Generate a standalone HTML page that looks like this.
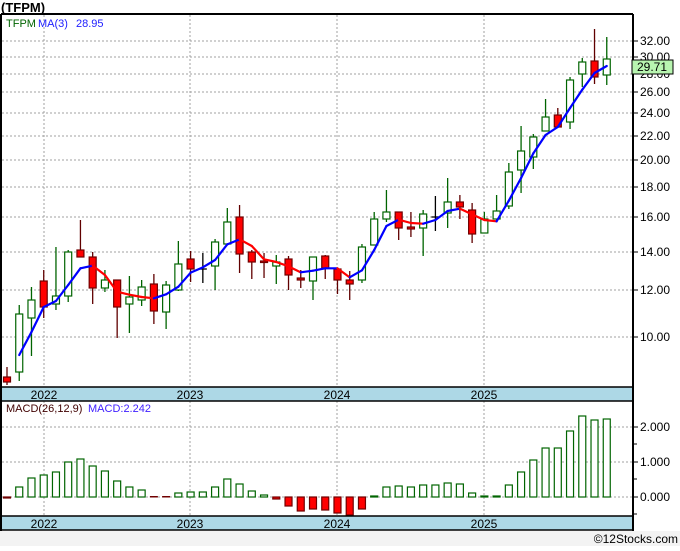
<!DOCTYPE html>
<html><head><meta charset="utf-8"><style>
html,body{margin:0;padding:0;background:#fff}
body{width:680px;height:546px;overflow:hidden;font-family:"Liberation Sans",sans-serif}
svg text{font-family:"Liberation Sans",sans-serif}
</style></head><body>
<svg id="s" width="680" height="546" xmlns="http://www.w3.org/2000/svg">
<rect x="0" y="0" width="680" height="546" fill="#fff"/>
<rect x="0" y="531" width="680" height="15" fill="#f3f3f3"/>
<text x="1" y="12" font-size="13" font-weight="bold" fill="#000">(TFPM)</text>
<g id="grid" stroke="#a0a0a0" stroke-width="1" stroke-dasharray="2,2"></g>
<g id="c"></g>
<rect x="1" y="387" width="632" height="14" fill="#add8e6" stroke="#000" stroke-width="1.5"/>
<rect x="1" y="516" width="632" height="14" fill="#add8e6" stroke="#000" stroke-width="1.5"/>
<g font-size="12" fill="#000" text-anchor="middle">
<text x="44" y="399">2022</text><text x="190" y="399">2023</text><text x="337" y="399">2024</text><text x="484" y="399">2025</text>
<text x="44" y="528">2022</text><text x="190" y="528">2023</text><text x="337" y="528">2024</text><text x="484" y="528">2025</text>
</g>
<line x1="1" y1="14" x2="633" y2="14" stroke="#000" stroke-width="2"/>
<line x1="1" y1="14" x2="1" y2="531" stroke="#000" stroke-width="2"/>
<line x1="633" y1="14" x2="633" y2="531" stroke="#000" stroke-width="2"/>
<g font-size="12" fill="#000" id="lab"></g>
<text x="6" y="27" font-size="11" fill="#006400">TFPM</text>
<text x="38" y="27" font-size="11" fill="#2020ff">MA(3)</text>
<text x="76" y="27" font-size="11" fill="#2020ff">28.95</text>
<text x="6" y="412" font-size="11" fill="#400000">MACD(26,12,9)</text>
<text x="88" y="412" font-size="11" fill="#4020ff">MACD:2.242</text>
<rect x="632" y="60" width="41" height="14" fill="#b8f5b0" stroke="#000" stroke-width="1"/>
<text x="652" y="71" font-size="12" text-anchor="middle" fill="#000">29.71</text>
<text x="678" y="543" font-size="12" text-anchor="end" fill="#000">©12Stocks.com</text>
</svg>
<script>
var NS="http://www.w3.org/2000/svg";
function el(p,t,a){var e=document.createElementNS(NS,t);for(var k in a)e.setAttribute(k,a[k]);p.appendChild(e);return e;}
var g=document.getElementById('grid'),c=document.getElementById('c'),lab=document.getElementById('lab');
var levels=[[41,"32.00"],[57,"30.00"],[74,"28.00"],[92,"26.00"],[113,"24.00"],[136,"22.00"],[160,"20.00"],[187,"18.00"],[217,"16.00"],[252,"14.00"],[290,"12.00"],[337,"10.00"]];
levels.forEach(function(l){el(g,'line',{x1:2,x2:633,y1:l[0],y2:l[0]});el(lab,'line',{x1:633,x2:638,y1:l[0],y2:l[0],stroke:'#000'});var t=el(lab,'text',{x:640,y:l[0]+4});t.textContent=l[1];});
[[427,"2.000"],[462,"1.000"],[497,"0.000"]].forEach(function(l){el(g,'line',{x1:2,x2:633,y1:l[0],y2:l[0]});el(lab,'line',{x1:633,x2:638,y1:l[0],y2:l[0],stroke:'#000'});var t=el(lab,'text',{x:640,y:l[0]+4});t.textContent=l[1];});
[444,479,514].forEach(function(y){el(lab,'line',{x1:633,x2:637,y1:y,y2:y,stroke:'#000'});});
[44,190,337,484].forEach(function(x){el(g,'line',{x1:x,x2:x,y1:15,y2:387});el(g,'line',{x1:x,x2:x,y1:401,y2:516});});
var d=[[367,377,382,385,'r'],[305,314,372,381,'g'],[287,300,318,356,'g'],[270,281,307,318,'r'],[247,296,304,310,'g'],[250,252,296,302,'g'],[220,250,257,257,'r'],[252,257,288,304,'r'],[270,280,288,292,'g'],[280,280,307,338,'r'],[276,297,304,333,'g'],[280,287,300,306,'g'],[274,284,311,324,'r'],[281,285,312,329,'g'],[241,264,290,291,'g'],[251,259,269,282,'r'],[253,269,269,283,'k'],[239,242,266,290,'g'],[208,222,244,245,'g'],[205,217,254,273,'r'],[250,252,262,279,'r'],[253,261,262,278,'r'],[255,262,266,284,'g'],[256,259,275,290,'r'],[270,278,280,288,'r'],[257,257,281,300,'g'],[255,256,268,279,'r'],[269,269,280,294,'r'],[271,280,284,300,'r'],[244,247,280,283,'g'],[212,219,245,245,'g'],[190,212,219,222,'g'],[212,212,228,240,'r'],[212,227,229,237,'r'],[210,214,228,256,'g'],[196,217,217,231,'k'],[178,202,213,228,'g'],[195,202,207,219,'r'],[203,210,234,243,'r'],[212,219,233,233,'g'],[195,211,219,221,'g'],[163,172,206,209,'g'],[126,151,170,193,'g'],[134,137,157,169,'g'],[99,117,131,131,'g'],[108,115,127,127,'r'],[77,80,122,129,'g'],[58,62,74,87,'g'],[29,61,77,84,'r'],[37,59,75,85,'g']];
var X=function(i){return 7+12.24*i;};
var closes=[];
d.forEach(function(q,i){var x=X(i);var col=q[4]=='g'?'#006400':(q[4]=='r'?'#600000':'#000');
el(c,'line',{x1:x,x2:x,y1:q[0],y2:q[3],stroke:col,'stroke-width':1.3});
if(q[4]=='k'){el(c,'line',{x1:x-4,x2:x+4,y1:q[1],y2:q[1],stroke:'#000','stroke-width':1.3});}
else{var h=Math.max(q[2]-q[1],1.5);el(c,'rect',{x:x-3.5,y:q[1],width:7,height:h,fill:q[4]=='r'?'#ff0000':'#fff',stroke:q[4]=='r'?'#700000':'#006400','stroke-width':1.2});}
closes.push(q[4]=='g'?q[1]:q[2]);});
var ma=[];for(var i=0;i<d.length;i++){if(i==0){ma.push(null);continue;}if(i==1){ma.push(355);continue;}ma.push((closes[i]+closes[i-1]+closes[i-2])/3);}
for(var i=2;i<d.length;i++){var col=ma[i]<=ma[i-1]?'#0000ff':'#ff0000';el(c,'line',{x1:X(i-1),y1:ma[i-1],x2:X(i),y2:ma[i],stroke:col,'stroke-width':2.2,'stroke-linecap':'round'});}
var m=[498,487,478,475,472,462,459,466,471,481,487,490,497,497,493,492,492,487,479,484,491,495,499,506,511,509,510,513,515,509,496,487,486,487,485,485,483,484,493,496,496,485,472,460,448,448,431,416,420,419];
m.forEach(function(y,i){var x=X(i);
if(y>497.5){el(c,'rect',{x:x-3.5,y:497,width:7,height:y-497,fill:'#ff0000',stroke:'#700000','stroke-width':1.2});}
else if(y>=496.5){el(c,'rect',{x:x-4,y:496,width:8,height:1.5,fill:(i==12||i==13||i==0)?'#700000':'#006400'});}
else{el(c,'rect',{x:x-3.5,y:y,width:7,height:497-y,fill:'#fff',stroke:'#006400','stroke-width':1.2});}});
</script>
</body></html>
